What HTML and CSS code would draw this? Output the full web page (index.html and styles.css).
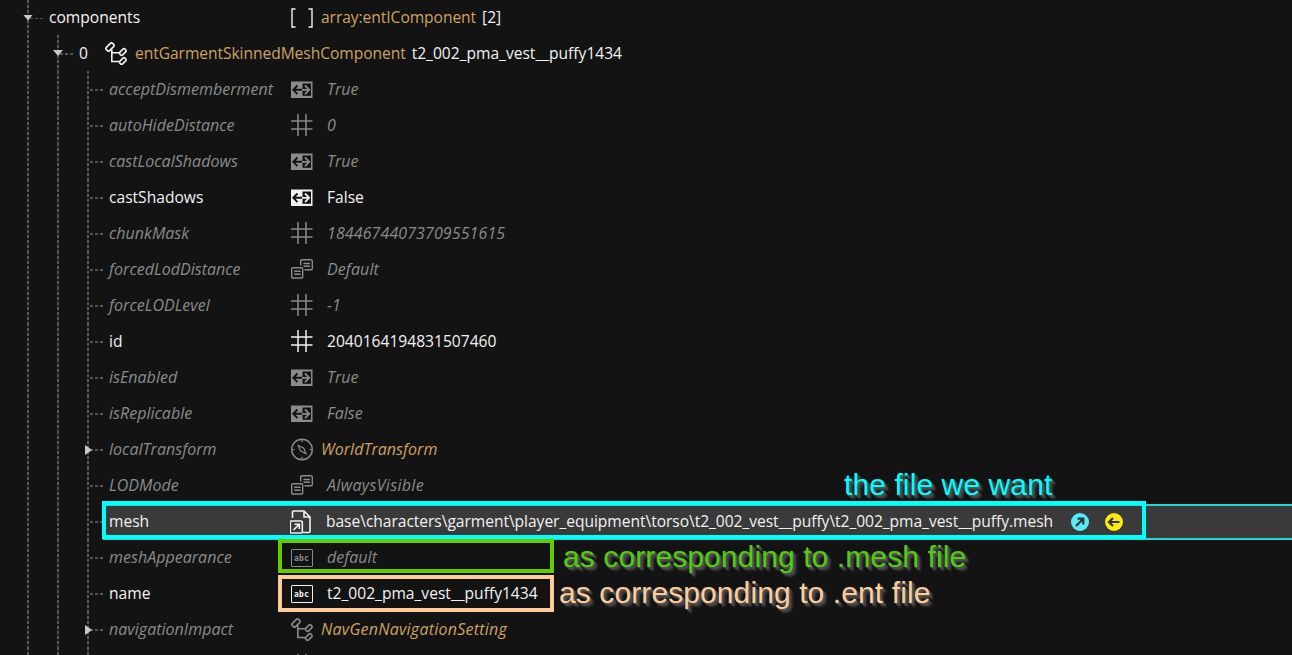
FILE: index.html
```
<!DOCTYPE html>
<html lang="en">
<head>
<meta charset="utf-8">
<title>components</title>
<link rel="stylesheet" href="styles.css">
</head>
<body>
<svg class="defs" aria-hidden="true">
  <symbol id="i-bool" viewBox="0 0 22 18"><path d="M0 .5h21.500v16.500H0z" fill="currentColor"/><path d="M11.500 2.500h8.500v12.300h-8.500z" fill="#131313"/><path d="M2.500 8.800H11M6.500 4.500 2.300 8.800l4.200 4.300" fill="none" stroke="#131313" stroke-width="1.900"/><path d="M11 8.800h7.400M14 4.500 18.200 8.800l-4.200 4.300" fill="none" stroke="currentColor" stroke-width="1.800"/></symbol>
  <symbol id="i-num" viewBox="0 0 22 24"><path d="M7 1v22M15 1v22M0 8h21.500M0 16h21.500" fill="none" stroke="currentColor" stroke-width="1.500"/></symbol>
  <symbol id="i-enum" viewBox="0 0 22 20"><g fill="none" stroke="currentColor" stroke-width="1.400"><path d="M9.700 6.500V2q0-1.200 1.200-1.200h9.200q1.200 0 1.200 1.200v7.500q0 1.200-1.200 1.200h-6.600M12.500 4.500h6.500M12.500 7.300h6.500"/><rect x=".7" y="8.700" width="11" height="10.300" rx="1"/><path d="M3.200 12.300h6.500M3.200 15.300h6.500"/></g></symbol>
  <symbol id="i-array" viewBox="0 0 22 20"><path d="M4.500 1H1v18h3.500M17.500 1H21v18h-3.500" fill="none" stroke="currentColor" stroke-width="1.400"/></symbol>
  <symbol id="i-node" viewBox="0 0 22 23"><g fill="none" stroke="currentColor" stroke-width="1.600"><rect x="-4.400" y="-2.300" width="8.800" height="4.600" rx="1.600" transform="translate(5 5) rotate(-45)"/><path d="M6.800 7.500v12H14M6.800 10.800H14"/><rect x="-3.600" y="-1.900" width="7.200" height="3.800" rx="1.500" transform="translate(17.800 10) rotate(-45)"/><rect x="-3.600" y="-1.900" width="7.200" height="3.800" rx="1.500" transform="translate(17.800 19) rotate(-45)"/></g></symbol>
  <symbol id="i-compass" viewBox="0 0 22 23"><g fill="none" stroke="currentColor" stroke-width="1.200"><circle cx="11" cy="11.500" r="10.300" stroke-width="1.400"/><path d="M7.200 7.500 12.800 10.300 15 15.800 9.500 12.900zM11 1.500v2.500M11 19v2.500M1 11.500h2.500M18.500 11.500H21"/></g></symbol>
  <symbol id="i-file" viewBox="0 0 22 24"><g fill="none" stroke="currentColor" stroke-width="1.600"><path d="M2.500 8V2q0-1 1-1H14l6 6v14.500q0 1-1 1h-6M14 1v6h6"/><rect x=".3" y="11" width="12" height="12" rx="1"/><path d="M3.500 20 9 14.500M4.500 14.300h4.800v4.800"/></g></symbol>
</svg>
<main class="tree">
  <div class="row set"><i class="guide open"></i><b class="label">components</b><svg class="icon h20"><use href="#i-array"/></svg><span class="type">array:entIComponent</span><span class="extra">[2]</span></div>
  <div class="row set"><i class="guide"></i><i class="guide open"></i><b class="label index">0</b><svg class="icon h23"><use href="#i-node"/></svg><span class="type">entGarmentSkinnedMeshComponent</span><span class="extra">t2_002_pma_vest__puffy1434</span></div>
  <div class="row"><i class="guide"></i><i class="guide"></i><i class="guide leaf"></i><b class="label">acceptDismemberment</b><svg class="icon h18"><use href="#i-bool"/></svg><span class="value">True</span></div>
  <div class="row"><i class="guide"></i><i class="guide"></i><i class="guide leaf"></i><b class="label">autoHideDistance</b><svg class="icon h24"><use href="#i-num"/></svg><span class="value">0</span></div>
  <div class="row"><i class="guide"></i><i class="guide"></i><i class="guide leaf"></i><b class="label">castLocalShadows</b><svg class="icon h18"><use href="#i-bool"/></svg><span class="value">True</span></div>
  <div class="row set"><i class="guide"></i><i class="guide"></i><i class="guide leaf"></i><b class="label">castShadows</b><svg class="icon h18"><use href="#i-bool"/></svg><span class="value">False</span></div>
  <div class="row"><i class="guide"></i><i class="guide"></i><i class="guide leaf"></i><b class="label">chunkMask</b><svg class="icon h24"><use href="#i-num"/></svg><span class="value wide">18446744073709551615</span></div>
  <div class="row"><i class="guide"></i><i class="guide"></i><i class="guide leaf"></i><b class="label">forcedLodDistance</b><svg class="icon h20"><use href="#i-enum"/></svg><span class="value wide">Default</span></div>
  <div class="row"><i class="guide"></i><i class="guide"></i><i class="guide leaf"></i><b class="label">forceLODLevel</b><svg class="icon h24"><use href="#i-num"/></svg><span class="value wide">-1</span></div>
  <div class="row set"><i class="guide"></i><i class="guide"></i><i class="guide leaf"></i><b class="label">id</b><svg class="icon h24"><use href="#i-num"/></svg><span class="value">2040164194831507460</span></div>
  <div class="row"><i class="guide"></i><i class="guide"></i><i class="guide leaf"></i><b class="label">isEnabled</b><svg class="icon h18"><use href="#i-bool"/></svg><span class="value">True</span></div>
  <div class="row"><i class="guide"></i><i class="guide"></i><i class="guide leaf"></i><b class="label">isReplicable</b><svg class="icon h18"><use href="#i-bool"/></svg><span class="value">False</span></div>
  <div class="row"><i class="guide"></i><i class="guide"></i><i class="guide closed"></i><b class="label">localTransform</b><svg class="icon h23"><use href="#i-compass"/></svg><span class="type">WorldTransform</span></div>
  <div class="row"><i class="guide"></i><i class="guide"></i><i class="guide leaf"></i><b class="label">LODMode</b><svg class="icon h20"><use href="#i-enum"/></svg><span class="value mode">AlwaysVisible</span></div>
  <div class="row set"><i class="guide"></i><i class="guide"></i><i class="guide leaf"></i><div class="selected"><b class="label">mesh</b><svg class="icon h24"><use href="#i-file"/></svg><span class="value path">base\characters\garment\player_equipment\torso\t2_002_vest__puffy\t2_002_pma_vest__puffy.mesh</span>
    <svg class="action" viewBox="0 0 18 18"><circle cx="9" cy="9" r="9" fill="#54ecfb"/><path d="M5 13 11.800 6.200M6.500 5.700h5.800v5.800" fill="none" stroke="#333" stroke-width="2.200"/></svg>
    <svg class="action" viewBox="0 0 18 18"><circle cx="9" cy="9" r="9" fill="#fcea10"/><path d="M4.500 9h10M8 5 4 9l4 4" fill="none" stroke="#333" stroke-width="2.200"/></svg></div></div>
  <div class="row"><i class="guide"></i><i class="guide"></i><i class="guide leaf"></i><b class="label">meshAppearance</b><span class="icon abc">abc</span><span class="value">default</span></div>
  <div class="row set"><i class="guide"></i><i class="guide"></i><i class="guide leaf"></i><b class="label">name</b><span class="icon abc">abc</span><span class="value">t2_002_pma_vest__puffy1434</span></div>
  <div class="row"><i class="guide"></i><i class="guide"></i><i class="guide closed"></i><b class="label">navigationImpact</b><svg class="icon h23"><use href="#i-node"/></svg><span class="type setting">NavGenNavigationSetting</span></div>
  <div class="row"><i class="guide"></i><i class="guide"></i><i class="guide leaf"></i><b class="label"></b><svg class="icon h24"><use href="#i-num"/></svg></div>
  <div class="frame frame-mesh"></div>
  <div class="frame frame-appearance"></div>
  <div class="frame frame-name"></div>
  <p class="note note-mesh">the file we want</p>
  <p class="note note-appearance">as corresponding to .mesh file</p>
  <p class="note note-name">as corresponding to .ent file</p>
</main>
</body>
</html>
```
FILE: styles.css
```
* { box-sizing: border-box; }
body { margin: 0; background: #131313; overflow: hidden; font: 16px/36px "Open Sans", "Noto Sans", sans-serif; }
.defs { position: absolute; width: 0; height: 0; }
.tree { position: relative; width: 1292px; height: 655px; overflow: hidden; }
.row { display: flex; align-items: center; height: 36px; padding-left: 13px; color: #8b8b8b; font-style: italic; letter-spacing: .03px; white-space: nowrap; }
.row:first-child { height: 35px; }
.row:first-child .label, .row:first-child .type, .row:first-child .extra { margin-top: -1px; }
.set { color: #f2f2f2; font-style: normal; font-size: 15.6px; letter-spacing: 0; }
.guide { position: relative; flex: none; width: 30px; height: 36px; background: repeating-linear-gradient(#575757 0 3px, #202020 3px 5px) 14px 0 / 2px 100% no-repeat; }
.leaf::before, .open::before, .closed::before { content: ""; position: absolute; left: 17px; top: 18px; width: 13px; height: 1.5px; background: repeating-linear-gradient(90deg, #555 0 3px, transparent 3px 5px); }
.open::after, .closed::after { content: ""; position: absolute; background: #c8c8c8; }
.open::after { left: 10px; top: 15px; width: 10px; height: 6px; clip-path: polygon(0 0, 100% 0, 50% 100%); }
.closed::after { left: 12px; top: 14px; width: 7px; height: 10px; clip-path: polygon(0 0, 100% 50%, 0 100%); }
.label { flex: none; width: 188px; padding-left: 6px; font-weight: 400; }
.row:first-child .label { width: 248px; }
.row .index { width: 32px; }
.icon { flex: none; width: 22px; overflow: visible; position: relative; left: -.4px; }
.h18 { height: 18px; margin-top: 1px; }
.h20 { height: 20px; }
.h23 { height: 23px; }
.h24 { height: 24px; }
.abc { height: 18px; margin-top: 1px; border: 1px solid; border-radius: 1px; font: normal bold 8px/17px "DejaVu Sans Mono", monospace; letter-spacing: .2px; text-align: center; }
.value { margin-left: 14px; }
.wide { letter-spacing: .1px; }
.mode { letter-spacing: .32px; }
.type { margin-left: 8px; color: #cfa262; }
.set .type { letter-spacing: -.06px; }
.row .setting { letter-spacing: .24px; }
.extra { margin-left: 6px; letter-spacing: -.01px; }
.selected { display: flex; align-items: center; flex: 1; height: 36px; margin-top: 1px; background: #3a3a3a; border: solid #1edccf; border-width: 2px 0; }
.selected .label, .selected .path { margin-top: -2px; }
.selected .icon { left: -1px; }
.path { width: 732px; margin-right: 13px; letter-spacing: -.045px; }
.selected .path { margin-left: 13px; }
.action { flex: none; width: 18px; height: 18px; margin-right: 16px; }
.frame { position: absolute; border: 4px solid; }
.frame-mesh { left: 102px; top: 501px; width: 1044px; height: 38px; color: #00ffff; }
.frame-appearance { left: 278px; top: 539px; width: 276px; height: 34px; color: #66cc00; }
.frame-name { left: 278px; top: 575px; width: 276px; height: 37px; color: #ffcc99; }
.note { position: absolute; margin: 0; font: 30px/36px "Liberation Sans", Arial, sans-serif; letter-spacing: .1px; white-space: nowrap; text-shadow: 1px 1px 1px #555, 2px 2px 1px #4c4c4c, 3px 3px 1px #3f3f3f, 4px 4px 2px #333; }
.note-mesh { left: 844px; top: 467px; color: #00ffff; }
.note-appearance { left: 563px; top: 539px; color: #55cc08; }
.note-name { left: 559px; top: 575px; color: #ffcc99; }
```
